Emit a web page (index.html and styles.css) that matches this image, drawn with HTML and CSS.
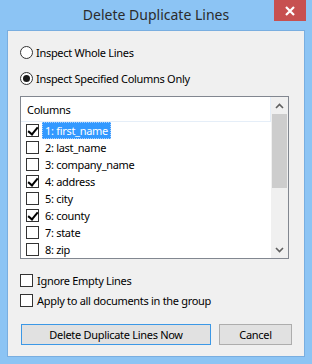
FILE: index.html
```html
<!DOCTYPE html>
<html lang="en">
<head>
  <meta charset="UTF-8">
  <title>Delete Duplicate Lines</title>
  <link rel="stylesheet" href="styles.css">
</head>
<body>
  <div class="window">
    <div class="titlebar">
      <span class="title">Delete Duplicate Lines</span>
      <button class="close-btn" aria-label="Close">
        <svg width="10" height="10" viewBox="0 0 10 10">
          <path d="M1 1L9 9M9 1L1 9" stroke="#fff" stroke-width="2.2"/>
        </svg>
      </button>
    </div>

    <div class="client">
      <label class="option first">
        <span class="radio"></span>Inspect Whole Lines
      </label>
      <label class="option second">
        <span class="radio checked"></span>Inspect Specified Columns Only
      </label>

      <div class="listbox">
        <div class="list-main">
          <div class="list-header">Columns</div>
          <ul class="rows">
            <li><span class="box checked"></span><span class="item selected">1: first_name</span></li>
            <li><span class="box"></span><span class="item">2: last_name</span></li>
            <li><span class="box"></span><span class="item">3: company_name</span></li>
            <li><span class="box checked"></span><span class="item">4: address</span></li>
            <li><span class="box"></span><span class="item">5: city</span></li>
            <li><span class="box checked"></span><span class="item">6: county</span></li>
            <li><span class="box"></span><span class="item">7: state</span></li>
            <li><span class="box"></span><span class="item">8: zip</span></li>
          </ul>
        </div>
        <div class="scrollbar">
          <span class="arrow">
            <svg width="9" height="6" viewBox="0 0 9 6"><path d="M1 5L4.5 1.5L8 5" fill="none" stroke="#606060" stroke-width="1.6"/></svg>
          </span>
          <span class="thumb"></span>
          <span class="track"></span>
          <span class="arrow">
            <svg width="9" height="6" viewBox="0 0 9 6"><path d="M1 1L4.5 4.5L8 1" fill="none" stroke="#606060" stroke-width="1.6"/></svg>
          </span>
        </div>
      </div>

      <label class="option check first-check">
        <span class="box"></span>Ignore Empty Lines
      </label>
      <label class="option check">
        <span class="box"></span>Apply to all documents in the group
      </label>

      <div class="buttons">
        <button class="btn default">Delete Duplicate Lines Now</button>
        <button class="btn cancel">Cancel</button>
      </div>
    </div>
  </div>
</body>
</html>
```

FILE: styles.css
```css
* {
  margin: 0;
  padding: 0;
  box-sizing: border-box;
}

body {
  font-family: "Noto Sans", "Open Sans", sans-serif;
  font-size: 11px;
  letter-spacing: -0.3px;
  color: #000;
  background: #fff;
}

.window {
  width: 312px;
  height: 364px;
  background: #8cc4f4;
  padding: 0 7px 7px 7px;
  display: flex;
  flex-direction: column;
}

/* title bar */
.titlebar {
  position: relative;
  height: 30px;
  display: flex;
  align-items: center;
  justify-content: center;
}

.title {
  font-size: 14px;
  letter-spacing: 0;
  color: #2b2b2b;
  margin-top: -1px;
}

.close-btn {
  position: absolute;
  top: 0;
  right: -1px;
  width: 32px;
  height: 21px;
  border: none;
  background: #c75050;
  display: flex;
  align-items: center;
  justify-content: center;
}

/* client area */
.client {
  flex: 1;
  background: #f0f0f0;
  border: 1px solid #79aee0;
  padding: 0 0 0 12px;
  display: flex;
  flex-direction: column;
}

.option {
  height: 20px;
  display: flex;
  align-items: center;
  gap: 3px;
  white-space: nowrap;
}

.option.first {
  margin-top: 11px;
}

.option.second {
  margin-top: 6px;
}

.radio {
  width: 13px;
  height: 13px;
  border: 1px solid #333;
  border-radius: 50%;
  background: #fff;
  display: flex;
  align-items: center;
  justify-content: center;
}

.radio.checked::after {
  content: "";
  width: 7px;
  height: 7px;
  border-radius: 50%;
  background: #1a1a1a;
}

.box {
  width: 13px;
  height: 13px;
  border: 1px solid #333;
  background: #fff;
  position: relative;
  flex-shrink: 0;
}

.box.checked::after {
  content: "";
  position: absolute;
  left: 3px;
  top: 0px;
  width: 4px;
  height: 8px;
  border: solid #000;
  border-width: 0 2px 2px 0;
  transform: rotate(40deg);
}

/* columns list */
.listbox {
  margin-top: 8px;
  width: 269px;
  height: 163px;
  border: 1px solid #828790;
  background: #fff;
  display: flex;
}

.list-main {
  flex: 1;
  display: flex;
  flex-direction: column;
}

.list-header {
  height: 25px;
  padding-left: 6px;
  display: flex;
  align-items: center;
  background: #fff;
  border-bottom: 1px solid #e5eef8;
  border-right: 1px solid #e5eef8;
}

.rows {
  list-style: none;
}

.rows li {
  height: 17px;
  display: flex;
  align-items: center;
  padding-left: 5px;
}

.item {
  margin-left: 3px;
  padding: 0 2px;
  height: 17px;
  line-height: 15px;
  border: 1px solid transparent;
}

.item.selected {
  background: #3399ff;
  color: #fff;
  border: 1px dotted #a8d0ff;
}

.scrollbar {
  width: 17px;
  background: #f0f0f0;
  display: flex;
  flex-direction: column;
}

.arrow {
  height: 17px;
  display: flex;
  align-items: center;
  justify-content: center;
}

.thumb {
  height: 74px;
  margin: 0 1px;
  background: #cdcdcd;
}

.track {
  flex: 1;
}

/* bottom options */
.option.first-check {
  margin-top: 11px;
}

.option.check {
  gap: 4px;
}

.buttons {
  margin-top: 14px;
  display: flex;
  gap: 8px;
  padding-left: 1px;
}

.btn {
  height: 21px;
  font-family: inherit;
  font-size: 11px;
  letter-spacing: -0.3px;
  color: #000;
  background: #e1e1e1;
  border: 1px solid #adadad;
}

.btn.default {
  width: 190px;
  border-color: #3c98e6;
}

.btn.cancel {
  width: 73px;
}
```
